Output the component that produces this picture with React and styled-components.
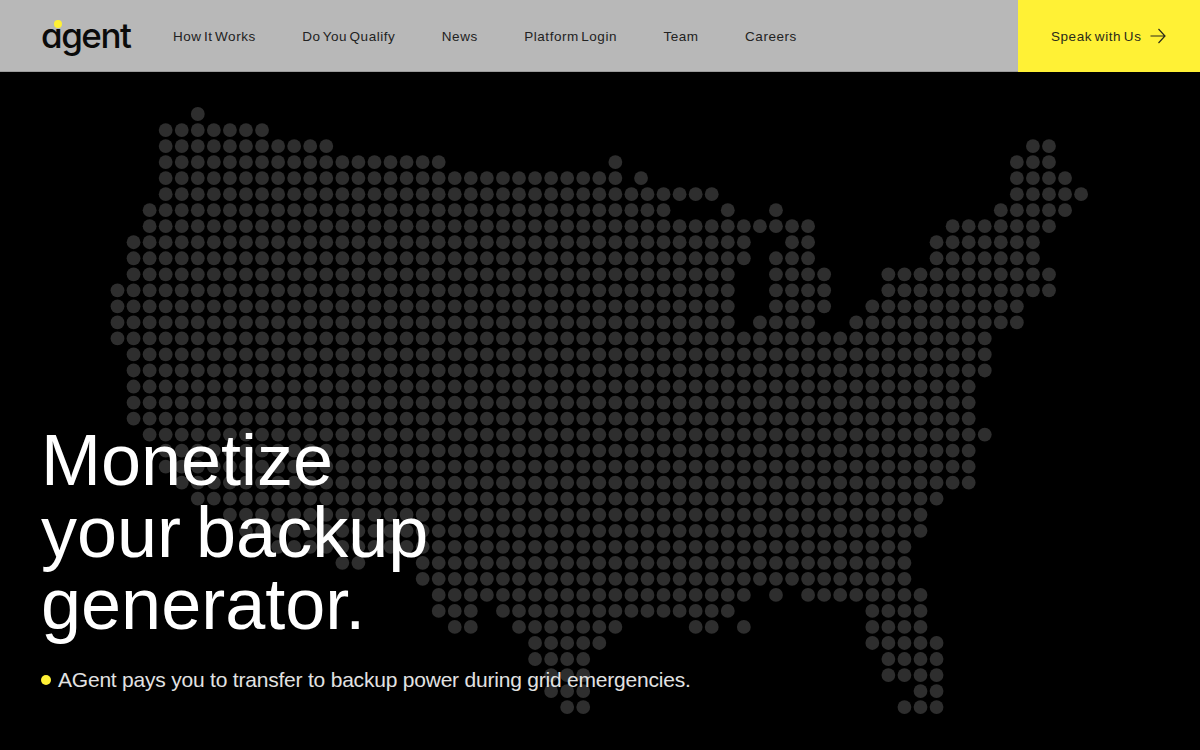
import styled, { createGlobalStyle } from 'styled-components';

const GlobalStyle = createGlobalStyle`
  html, body {
    margin: 0;
    padding: 0;
    background: #000;
  }
  * {
    box-sizing: border-box;
  }
`;

const yellow = '#fff135';
const dotColor = '#2e2e2e';

// each row of the map: [first column, last column] runs, top to bottom
const mapRows = [
  [[5, 5]],
  [[3, 9]],
  [[3, 13], [57, 58]],
  [[3, 20], [31, 31], [56, 58]],
  [[3, 31], [32.6, 32.6], [56, 59]],
  [[3, 37], [56, 60]],
  [[2, 34], [38, 38], [41, 41], [55, 59]],
  [[2, 43], [52, 58]],
  [[1, 39], [42, 43], [51, 57]],
  [[1, 39], [41, 43], [51, 57]],
  [[1, 38], [41, 44], [48, 58]],
  [[0, 38], [41, 44], [48, 58]],
  [[0, 38], [41, 44], [47, 56]],
  [[0, 38], [40, 43], [46, 56]],
  [[0, 54]],
  [[1, 54]],
  [[1, 54]],
  [[1, 53]],
  [[1, 53]],
  [[1, 53]],
  [[2, 54]],
  [[3, 53]],
  [[3, 53]],
  [[4, 53]],
  [[5, 51]],
  [[7, 50]],
  [[8, 50]],
  [[10, 49]],
  [[14, 15], [19, 49]],
  [[19, 49]],
  [[20, 39], [41, 41], [43, 50]],
  [[20, 22], [24, 38], [47, 50]],
  [[21, 22], [25, 31], [36, 37], [39, 39], [47, 50]],
  [[26, 30], [47, 51]],
  [[26, 29], [48, 51]],
  [[27, 29], [48, 51]],
  [[27, 29], [50, 51]],
  [[28, 29], [49, 51]],
];

const dots = mapRows.flatMap((runs, row) =>
  runs.flatMap(([from, to]) => {
    const out = [];
    for (let col = from; col <= to; col++) {
      out.push({ x: 117.5 + col * 16.06, y: 114 + row * 16.03 });
    }
    return out;
  })
);

const Page = styled.div`
  position: relative;
  width: 100%;
  height: 750px;
  display: flex;
  flex-direction: column;
  background: #000;
  overflow: hidden;
  font-family: 'Liberation Sans', Arial, sans-serif;
`;

const MapLayer = styled.svg`
  position: absolute;
  top: 0;
  left: 0;
  width: 1200px;
  height: 750px;
`;

const Header = styled.header`
  position: relative;
  z-index: 2;
  height: 72px;
  flex: none;
  display: flex;
  align-items: stretch;
  background: #b8b8b8;
  border-bottom: 1px solid #9c9c9c;
`;

const LogoWrap = styled.a`
  position: relative;
  display: block;
  width: 132px;
  margin-left: 41px;
  color: #0b0b0b;
  font-family: 'Inter', sans-serif;
  font-feature-settings: 'cv11' 1;
  font-size: 35px;
  font-weight: 500;
  line-height: 70px;
  letter-spacing: -1.5px;
`;

const LogoDot = styled.span`
  position: absolute;
  left: 13px;
  top: 20px;
  width: 8px;
  height: 8px;
  border-radius: 50%;
  background: ${yellow};
`;

const Nav = styled.nav`
  display: flex;
  align-items: center;
  gap: 46.4px;
  padding-top: 2px;
  flex: 1;
`;

const NavLink = styled.a`
  color: #222;
  font-size: 13.5px;
  letter-spacing: 0.55px;
  word-spacing: -1.9px;
  white-space: nowrap;
`;

const CallButton = styled.a`
  flex: none;
  width: 182px;
  height: 72px;
  display: flex;
  align-items: center;
  gap: 9px;
  padding-left: 33px;
  background: ${yellow};
  color: #2a2a1a;
  font-size: 13.5px;
  letter-spacing: 0.55px;
  word-spacing: -1.5px;
`;

const Hero = styled.main`
  position: relative;
  z-index: 1;
  flex: 1;
  display: flex;
  flex-direction: column;
  justify-content: flex-end;
  padding: 0 0 56px 41px;
`;

const Title = styled.h1`
  margin: 0 0 26px;
  color: #fff;
  font-size: 72px;
  font-weight: 400;
  line-height: 72px;
  word-spacing: -5px;
`;

const Sub = styled.p`
  display: flex;
  align-items: center;
  gap: 7px;
  margin: 0;
  color: #e2e2e2;
  font-size: 21px;
  line-height: 28px;
  letter-spacing: -0.21px;
`;

const Bullet = styled.span`
  width: 10px;
  height: 10px;
  border-radius: 50%;
  background: ${yellow};
`;

const navItems = ['How It Works', 'Do You Qualify', 'News', 'Platform Login', 'Team', 'Careers'];

export default function App() {
  return (
    <Page>
      <GlobalStyle />
      <MapLayer viewBox="0 0 1200 750">
        {dots.map((d) => (
          <circle key={`${d.x}-${d.y}`} cx={d.x} cy={d.y} r="6.9" fill={dotColor} />
        ))}
      </MapLayer>
      <Header>
        <LogoWrap>
          agent
          <LogoDot />
        </LogoWrap>
        <Nav>
          {navItems.map((item) => (
            <NavLink key={item}>{item}</NavLink>
          ))}
        </Nav>
        <CallButton>
          Speak with Us
          <svg width="16" height="16" viewBox="0 0 16 16" fill="none" stroke="#2a2a1a" strokeWidth="1.2">
            <path d="M0.5 8H15M8.5 1L15 8L8.5 15" />
          </svg>
        </CallButton>
      </Header>
      <Hero>
        <Title>
          Monetize
          <br />
          your backup
          <br />
          generator.
        </Title>
        <Sub>
          <Bullet />
          AGent pays you to transfer to backup power during grid emergencies.
        </Sub>
      </Hero>
    </Page>
  );
}
